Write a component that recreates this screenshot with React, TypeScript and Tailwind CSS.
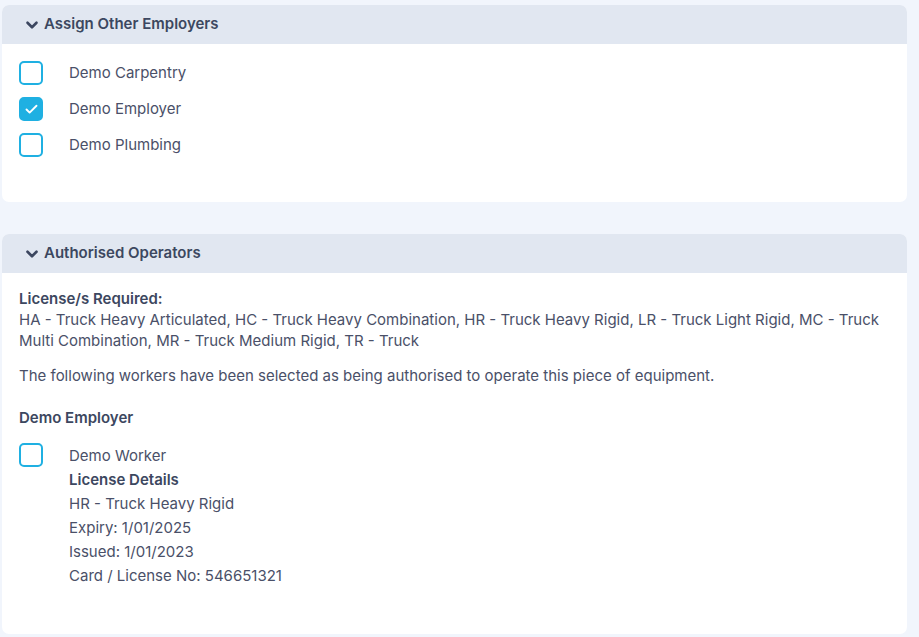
import { Check, ChevronDown } from 'lucide-react'

const employers = [
  { name: 'Demo Carpentry', checked: false },
  { name: 'Demo Employer', checked: true },
  { name: 'Demo Plumbing', checked: false },
]

function Box({ checked }: { checked: boolean }) {
  return (
    <div
      className={
        checked
          ? 'w-6 h-6 rounded-[5px] border-2 border-[#1fb0e2] bg-[#1fb0e2] flex items-center justify-center shrink-0'
          : 'w-6 h-6 rounded-[5px] border-2 border-[#1fb0e2] bg-white shrink-0'
      }
    >
      {checked && <Check size={15} strokeWidth={3} className="text-white" />}
    </div>
  )
}

function Panel({ title, children }: { title: string; children: React.ReactNode }) {
  return (
    <section className="bg-white rounded-[7px] overflow-hidden">
      <div className="h-[39px] bg-[#e1e7f1] flex items-center pl-[21px] gap-[3px]">
        <ChevronDown size={18} strokeWidth={3.5} className="text-[#3c4760]" />
        <h2 className="text-[15px] leading-[20px] -mt-[1px] font-semibold text-[#3c4760]">{title}</h2>
      </div>
      {children}
    </section>
  )
}

export default function App() {
  return (
    <div
      className="min-h-[637px] bg-[#f1f5fc] pl-[2px] pr-[12px] pt-[5px] text-[15px] text-[#4a5068]"
      style={{ fontFamily: 'Inter, "Open Sans", sans-serif' }}
    >
      <Panel title="Assign Other Employers">
        <div className="pt-[17px] pb-[45px] pl-[17px] flex flex-col gap-[12px]">
          {employers.map((e) => (
            <label key={e.name} className="flex items-center gap-[26px]">
              <Box checked={e.checked} />
              <span>{e.name}</span>
            </label>
          ))}
        </div>
      </Panel>

      <div className="h-[32px]" />

      <Panel title="Authorised Operators">
        <div className="pl-[17px] pr-[20px] pt-[15px] pb-[46px] leading-[21px]">
          <div className="font-semibold text-[#3c4760]">License/s Required:</div>
          <p>
            HA - Truck Heavy Articulated, HC - Truck Heavy Combination, HR - Truck Heavy Rigid, LR - Truck Light Rigid, MC - Truck Multi Combination, MR - Truck Medium Rigid, TR - Truck
          </p>
          <p className="mt-[14px]">
            The following workers have been selected as being authorised to operate this piece of equipment.
          </p>
          <div className="mt-[21px] font-semibold text-[#3c4760]">Demo Employer</div>
          <div className="mt-[15px] flex items-start gap-[26px]">
            <Box checked={false} />
            <div className="leading-[24px] mt-[1px]">
              <div>Demo Worker</div>
              <div className="font-semibold text-[#3c4760]">License Details</div>
              <div>HR - Truck Heavy Rigid</div>
              <div>Expiry: 1/01/2025</div>
              <div>Issued: 1/01/2023</div>
              <div>Card / License No: 546651321</div>
            </div>
          </div>
        </div>
      </Panel>
    </div>
  )
}
